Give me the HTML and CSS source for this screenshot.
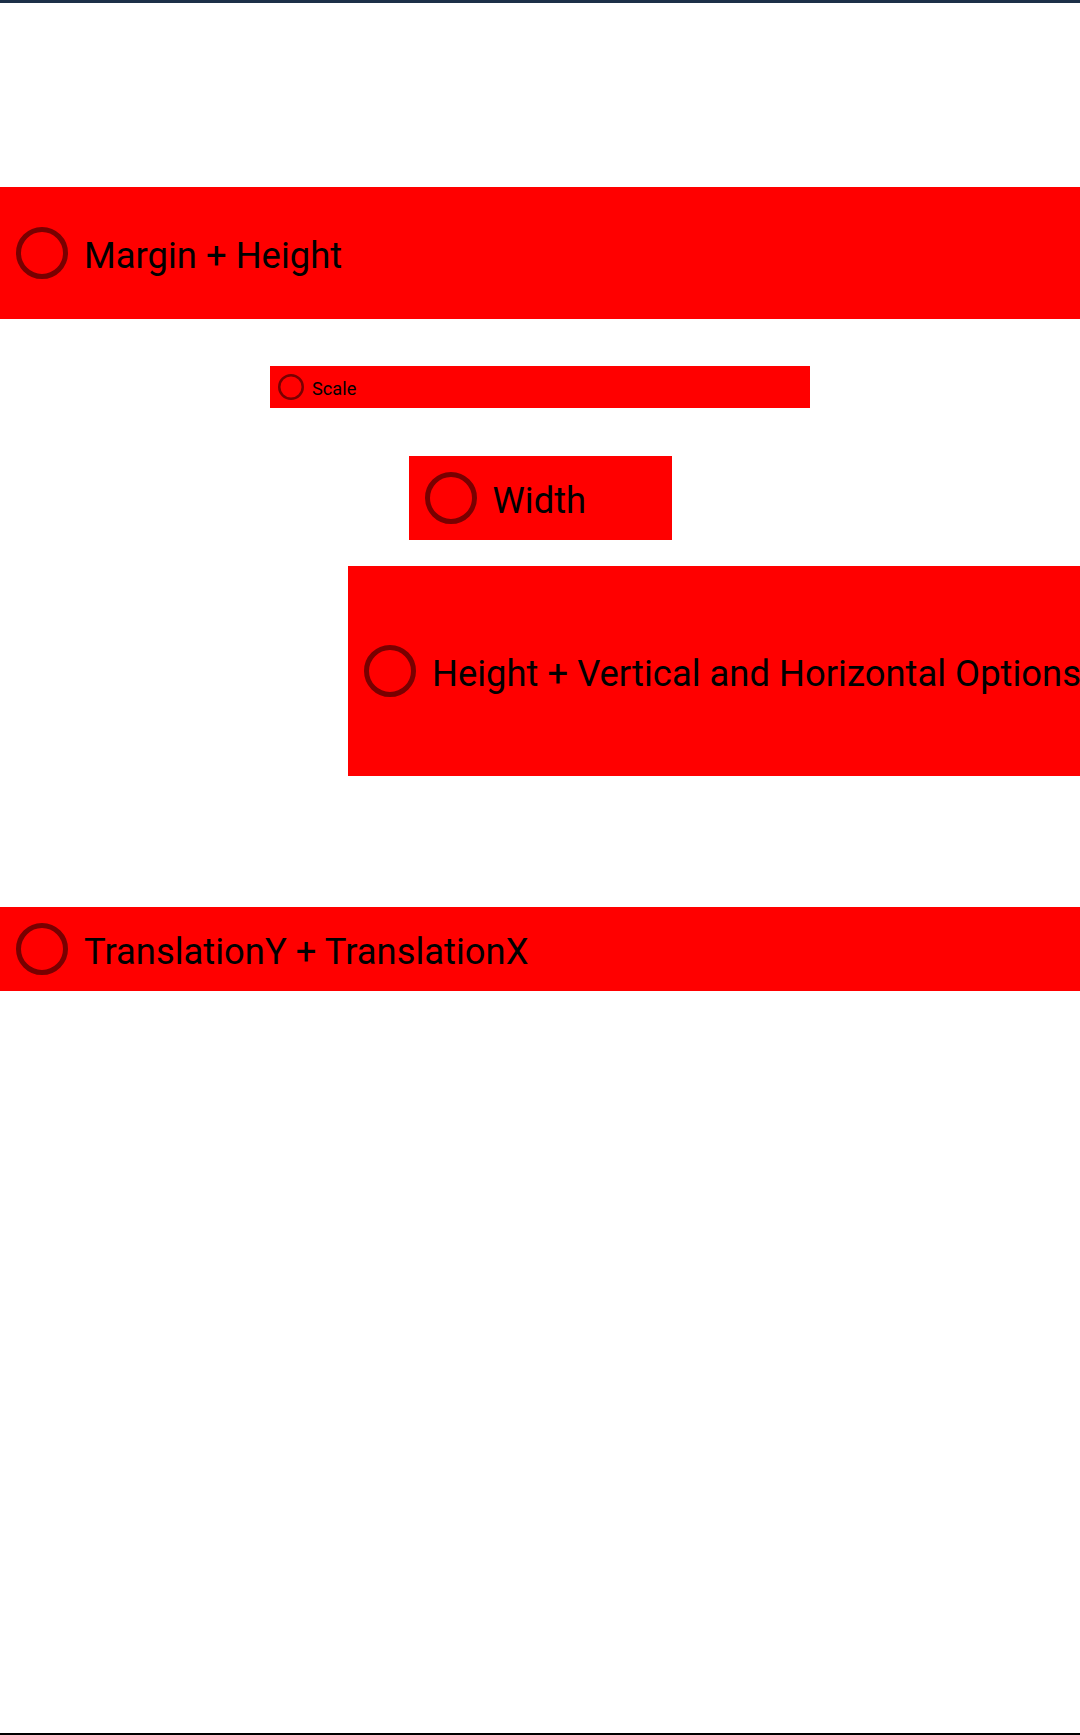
FILE: index.html
```html
<!DOCTYPE html>
<html>
<head>
<meta charset="utf-8">
<link rel="stylesheet" href="styles.css">
</head>
<body>
<div class="screen">
  <div class="topbar"></div>
  <div class="item item-margin">
    <span class="radio"></span><span class="label">Margin + Height</span>
  </div>
  <div class="item item-scale">
    <span class="radio"></span><span class="label">Scale</span>
  </div>
  <div class="item item-width">
    <span class="radio"></span><span class="label">Width</span>
  </div>
  <div class="item item-options">
    <span class="radio"></span><span class="label">Height + Vertical and Horizontal Options</span>
  </div>
  <div class="item item-translation">
    <span class="radio"></span><span class="label">TranslationY + TranslationX</span>
  </div>
  <div class="bottomline"></div>
</div>
</body>
</html>
```
FILE: styles.css
```css
html, body {
  margin: 0;
  padding: 0;
  background: #ffffff;
}

.screen {
  width: 1080px;
  height: 1735px;
  display: flex;
  flex-direction: column;
  overflow: hidden;
  font-family: Roboto, "Liberation Sans", sans-serif;
}

.topbar {
  height: 3px;
  flex: none;
  background: #1c3048;
}

.item {
  flex: none;
  display: flex;
  align-items: center;
  background: #ff0000;
  padding-left: 16px;
  box-sizing: border-box;
  height: 84px;
  white-space: nowrap;
}

.radio {
  flex: none;
  width: 52px;
  height: 52px;
  box-sizing: border-box;
  border: 5px solid #780000;
  border-radius: 50%;
  margin-right: 16px;
}

.label {
  font-size: 36.4px;
  color: #000000;
  padding-top: 4px;
}

.item-margin {
  margin-top: 184px;
  height: 132px;
  width: 1080px;
}

.item-scale {
  margin-top: 26px;
  width: 1080px;
  transform: scale(0.5);
  transform-origin: 540px 42px;
}

.item-width {
  margin-top: 27px;
  width: 263px;
  align-self: center;
}

.item-options {
  margin-top: 26px;
  margin-left: 348px;
  width: 1080px;
  height: 210px;
}

.item-translation {
  margin-top: 131px;
  width: 1080px;
}

.bottomline {
  margin-top: auto;
  height: 2px;
  flex: none;
  background: #000000;
}
```
